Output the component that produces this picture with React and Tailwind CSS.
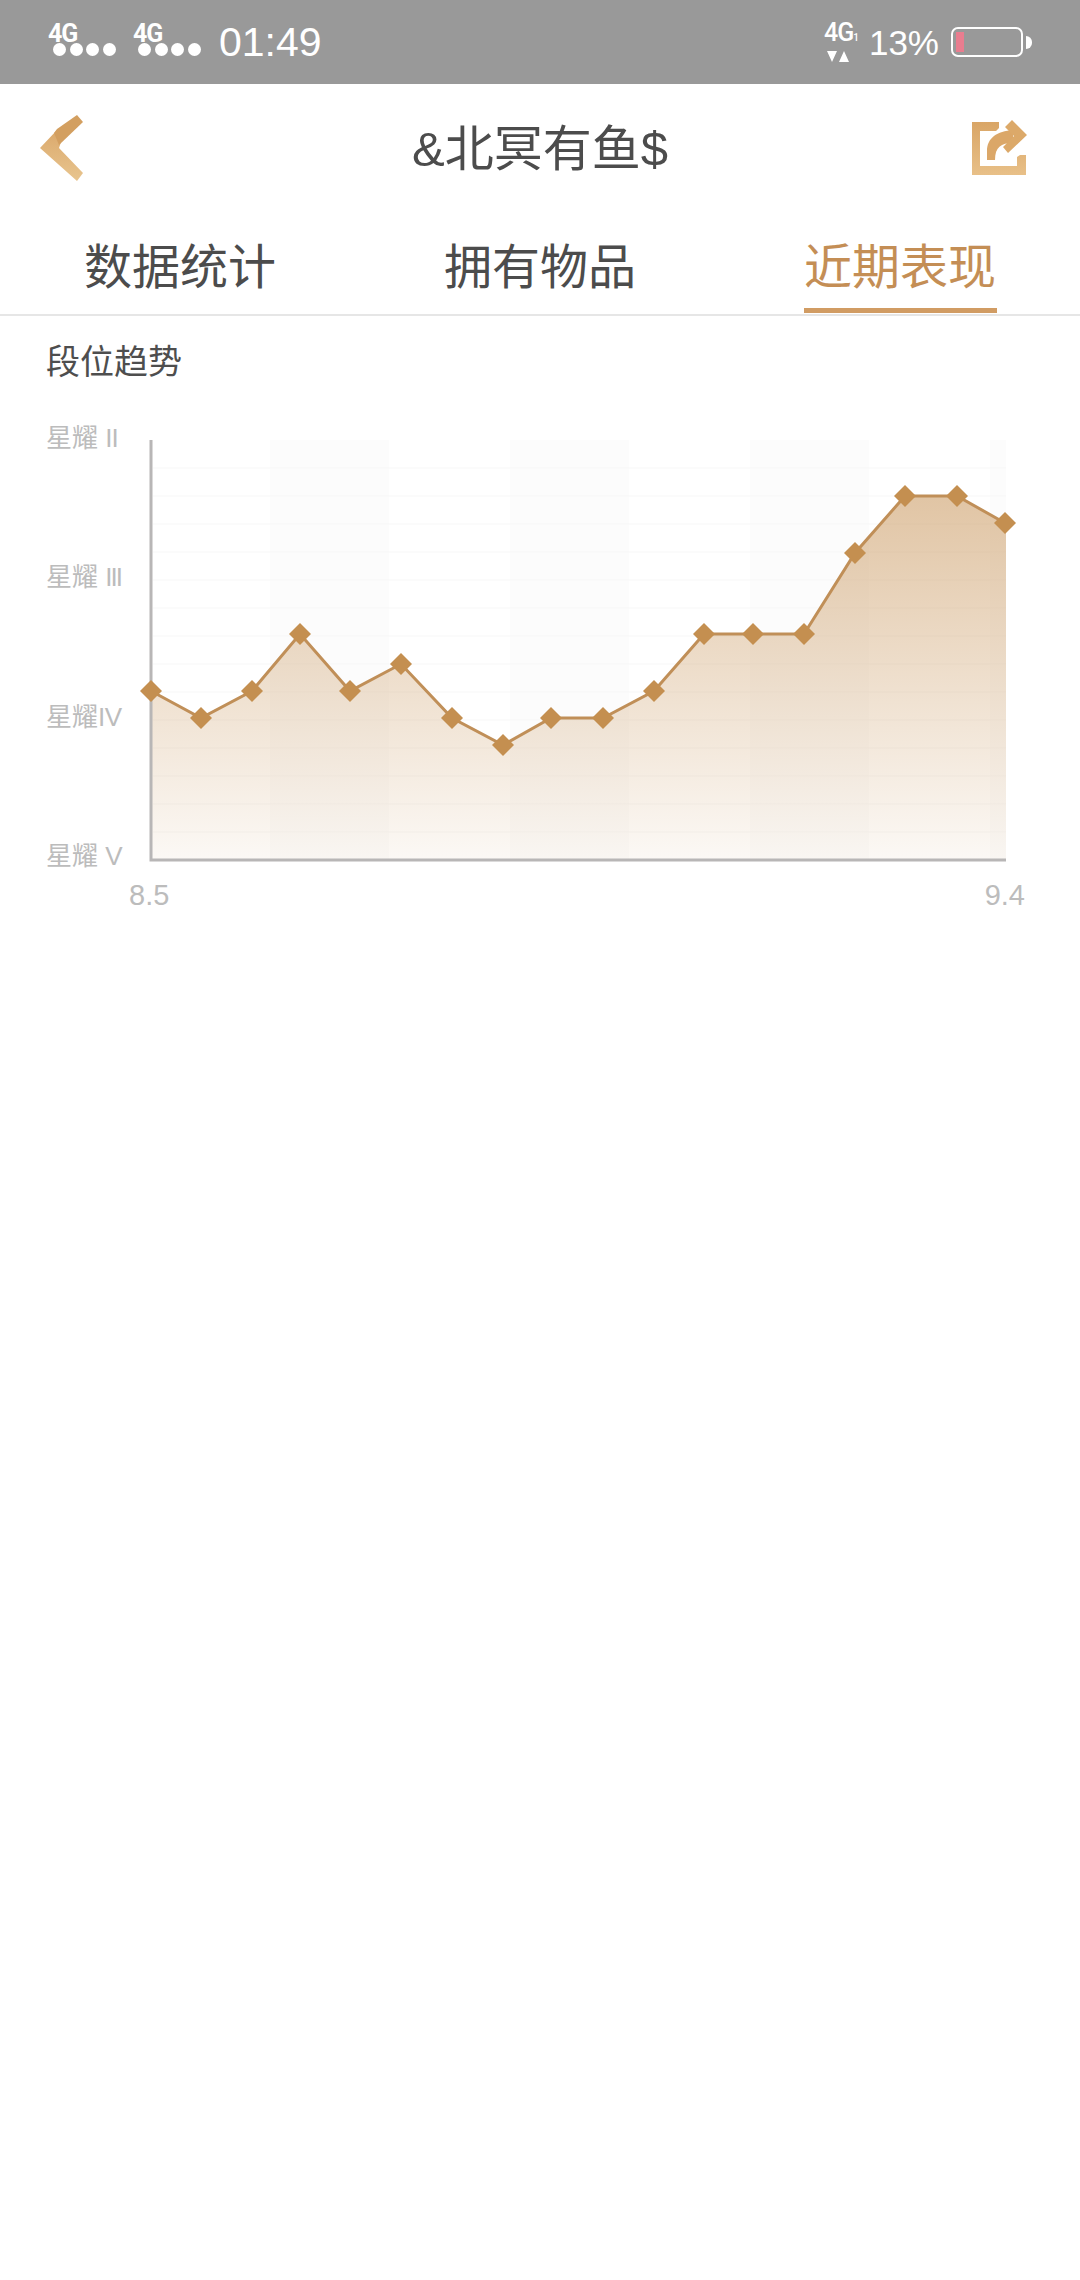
const FONT = '[font-family:"Liberation_Sans","Noto_Sans_CJK_SC",sans-serif]';

const points = [
  [151, 691], [201, 718], [252, 691], [300, 634], [350, 691], [401, 664],
  [452, 718], [503, 745], [551, 718], [603, 718], [654, 691], [704, 634],
  [753, 634], [804, 634], [855, 553], [905, 496], [957, 496], [1005, 523],
];

const bands = [270, 510, 750, 990];
const gridLines = [468, 496, 524, 552, 580, 608, 636, 664, 692, 720, 748, 776, 804, 832];
const yLabels = [
  ["星耀 ", "II", "tracking-[-1px]"],
  ["星耀 ", "III", "tracking-[-2px]"],
  ["星耀", "IV", "tracking-[-0.5px]"],
  ["星耀 ", "V", ""],
];
const tabs = ["数据统计", "拥有物品", "近期表现"];

function Signal() {
  return (
    <div className="flex flex-col w-[70px] -mt-[3px]">
      <span className="font-['Roboto'] font-bold text-[25px] leading-[18px] tracking-[-1px] text-white">4G</span>
      <div className="flex gap-[3.500px] ml-[5px]">
        <span className="w-[13px] h-[13px] rounded-full bg-white" />
        <span className="w-[13px] h-[13px] rounded-full bg-white" />
        <span className="w-[13px] h-[13px] rounded-full bg-white" />
        <span className="w-[13px] h-[13px] rounded-full bg-white" />
      </div>
    </div>
  );
}

function StatusBar() {
  return (
    <div className="h-[84px] bg-[#999999] flex items-center pl-[48px] pr-[48px] text-white">
      <Signal />
      <div className="ml-[15px]"><Signal /></div>
      <span className="ml-[16px] font-light text-[41px] leading-none">01:49</span>
      <div className="ml-auto flex items-center">
        <div className="flex flex-col items-center w-[34px]">
          <span className="font-['Roboto'] font-medium text-[25px] leading-[20px] tracking-[-1px]">
            4G<span className="text-[10px] align-baseline">1</span>
          </span>
          <svg width="24" height="11" viewBox="0 0 24 11" className="-ml-[5px] mt-[3px]">
            <path d="M1 0h10L6 11z M13 11h10L18 0z" fill="#fff" />
          </svg>
        </div>
        <span className="ml-[11px] font-light text-[35px] leading-none">13%</span>
        <div className="ml-[12px] w-[72px] h-[30px] rounded-[7px] border-2 border-white p-[3px]">
          <div className="w-[8px] h-full bg-[#e97d8f]" />
        </div>
        <div className="ml-[3px] w-[6px] h-[13px] bg-white rounded-r-full" />
      </div>
    </div>
  );
}

function BackIcon() {
  return (
    <svg width="46" height="68" viewBox="0 0 46 68">
      <defs>
        <linearGradient id="back" x1="0" y1="0" x2="0" y2="1">
          <stop offset="0" stopColor="#dba96c" />
          <stop offset="1" stopColor="#e8c58f" />
        </linearGradient>
      </defs>
      <path d="M1 34 18 16 24 22 20 34 44 59 38 67Z" fill="url(#back)" />
      <path d="M38 1 44 8 20 31 15 19 18 15Z" fill="#d39f60" />
    </svg>
  );
}

function ShareIcon() {
  return (
    <svg width="56" height="56" viewBox="0 0 56 56">
      <defs>
        <linearGradient id="share" x1="0" y1="0" x2="0" y2="1">
          <stop offset="0" stopColor="#d9a566" />
          <stop offset="1" stopColor="#e8c088" />
        </linearGradient>
      </defs>
      <path d="M1 2h27v6l-3 3H9v35h37V37l3-2h6v20H1z" fill="url(#share)" />
      <path d="M16 40V31C16 18 26 11 42 10V23C30 23 24 27 24 40Z" fill="#dba768" />
      <path d="M41 0 56 15 37 33 32 27 43 16 34 7z" fill="#dca969" />
    </svg>
  );
}

function Chart() {
  const line = points.map(([x, y]) => `${x},${y}`).join(" ");
  const area = `152,860 ${line} 1006,523 1006,860`;

  return (
    <svg className="w-[862px] h-[454px] overflow-visible" viewBox="146 420 862 454">
      <defs>
        <linearGradient id="area" x1="0" y1="0" x2="0" y2="1">
          <stop offset="0" stopColor="#c8955a" stopOpacity="0.55" />
          <stop offset="1" stopColor="#c8955a" stopOpacity="0.06" />
        </linearGradient>
      </defs>
      {bands.map((x) => (
        <rect key={x} x={x} y="440" width={Math.min(119, 1006 - x)} height="420" fill="#fcfcfc" />
      ))}
      {gridLines.map((y) => (
        <line key={y} x1="153" x2="1006" y1={y} y2={y} stroke="#f7f7f7" strokeWidth="1" />
      ))}
      <polygon points={area} fill="url(#area)" />
      <path d="M151 440V860H1006" fill="none" stroke="#b8b6b6" strokeWidth="3" />
      <polyline points={line} fill="none" stroke="#c08f58" strokeWidth="3" />
      {points.map(([x, y]) => (
        <path key={x} d={`M${x} ${y - 11}L${x + 11} ${y}L${x} ${y + 11}L${x - 11} ${y}Z`} fill="#c48f50" />
      ))}
    </svg>
  );
}

export default function App() {
  return (
    <div className={`min-h-screen bg-white ${FONT}`}>
      <StatusBar />

      <header className="h-[128px] grid grid-cols-[1fr_auto_1fr] items-center pl-[39px] pr-[53px]">
        <BackIcon />
        <h1 className="ml-[14px] pt-[2px] text-[49px] leading-none font-normal text-[#4c4c4c]">&amp;北冥有鱼$</h1>
        <div className="flex justify-end"><ShareIcon /></div>
      </header>

      <nav className="grid grid-cols-3 h-[104px] border-b-2 border-[#e6e6e6]">
        {tabs.map((tab, i) => (
          <div key={tab} className="flex justify-center">
            <span
              className={
                i === 2
                  ? "h-[101px] w-[193px] pt-[32px] text-center text-[48px] leading-[48px] text-[#c48e55] border-b-[5px] border-[#d19c63]"
                  : "h-[101px] w-[193px] pt-[32px] text-center text-[48px] leading-[48px] text-[#4c4c4c]"
              }
            >
              {tab}
            </span>
          </div>
        ))}
      </nav>

      <h2 className="pl-[46px] pt-[26px] text-[34px] leading-[40px] font-normal text-[#4e4e4e]">段位趋势</h2>

      <div className="mt-[38px] flex">
        <div className="w-[146px] h-[454px] pl-[46px] flex flex-col justify-between text-[26px] leading-[36px] text-[#bcbcbc]">
          {yLabels.map(([name, rank, spacing]) => (
            <span key={rank}>
              {name}
              <span className={spacing}>{rank}</span>
            </span>
          ))}
        </div>
        <Chart />
      </div>

      <div className="mt-[4px] pl-[129px] pr-[55px] flex justify-between text-[29px] leading-[34px] text-[#bcbcbc]">
        <span>8.5</span>
        <span>9.4</span>
      </div>
    </div>
  );
}
